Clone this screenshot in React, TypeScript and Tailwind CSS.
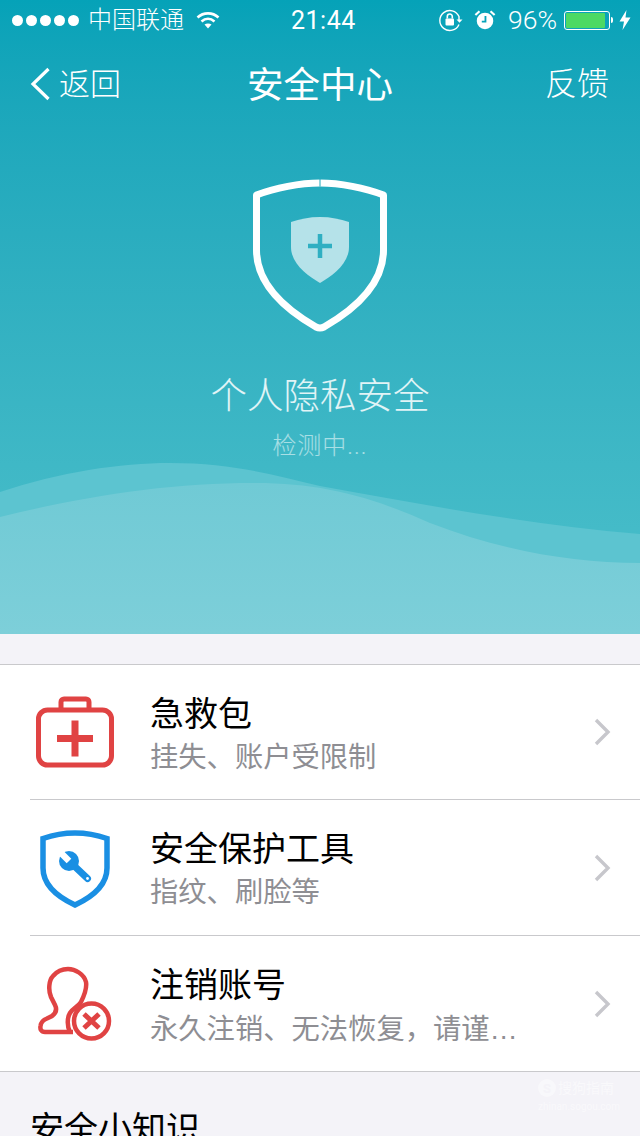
import React from "react";

function StatusBar() {
  return (
    <div className="flex h-10 items-center text-white relative">
      <div className="flex items-center pl-[12px] gap-[3px]">
        {[0, 1, 2, 3, 4].map((i) => (
          <span key={i} className="h-[11px] w-[11px] rounded-full bg-white" />
        ))}
      </div>
      <span className="ml-[9px] text-[24px] leading-none font-light">中国联通</span>
      <svg className="ml-[12px]" width="24" height="18" viewBox="0 0 24 18" fill="none" stroke="#fff" strokeWidth="2.6">
        <path d="M1.5 6.5C7.5 1 16.5 1 22.5 6.5" />
        <path d="M5.5 10.5C9.5 7 14.5 7 18.5 10.5" />
        <path d="M12 17.5L8.5 13.6C10.5 12.1 13.5 12.1 15.5 13.6Z" fill="#fff" stroke="none" />
      </svg>
      <span className="absolute left-[291px] top-[6px] text-[25px] leading-[30px] font-normal tracking-[0.5px]">21:44</span>
      <div className="ml-auto flex items-center pr-[9px]">
        <svg width="26" height="24" viewBox="0 0 26 24" fill="none" stroke="#fff" strokeWidth="1.4">
          <path d="M21 16.5A10 10 0 1 1 21 8.5V12" />
          <path d="M18.5 11.5h6l-3 3.2z" fill="#fff" stroke="none" />
          <rect x="7.5" y="10.5" width="8.5" height="7" rx="1" fill="#fff" stroke="none" />
          <path d="M9.3 10.5V8.5a2.5 2.5 0 0 1 5 0v2" strokeWidth="1.6" />
        </svg>
        <svg className="ml-[10px]" width="22" height="22" viewBox="0 0 24 24">
          <circle cx="12" cy="13" r="9" fill="#fff" />
          <path d="M1.5 6.5L6 2.5M22.5 6.5L18 2.5" stroke="#fff" strokeWidth="2.4" />
          <path d="M12.5 7.5v6.2H8.5" stroke="#07a3b9" strokeWidth="2" fill="none" />
        </svg>
        <span className="ml-[12px] text-[26.5px] leading-none font-light">96%</span>
        <div className="ml-[7px] h-[19px] w-[46px] rounded-[3px] border border-white p-[1px]">
          <div className="h-full w-[94%] rounded-[1px] bg-[#4cd964]" />
        </div>
        <div className="ml-[1px] h-[6px] w-[2px] rounded-r-sm bg-white" />
        <svg className="ml-[6px]" width="12" height="20" viewBox="0 0 12 20">
          <path d="M7.5 0L0.5 11.5H5L3.5 20L11.5 7.5H6.5Z" fill="#fff" />
        </svg>
      </div>
    </div>
  );
}

function NavBar() {
  return (
    <div className="flex h-[88px] items-center text-white relative">
      <svg className="ml-[30px]" width="22" height="34" viewBox="0 0 22 34" fill="none" stroke="#fff" strokeWidth="3.2">
        <path d="M18.5 2L3 17L18.5 32" />
      </svg>
      <span className="ml-[7px] text-[31px] leading-none font-light">返回</span>
      <span className="absolute left-0 right-0 pt-[4px] text-center text-[36.500px] leading-none font-normal">安全中心</span>
      <span className="ml-auto mr-[31px] text-[32px] leading-none font-light">反馈</span>
    </div>
  );
}

function BigShield() {
  return (
    <svg width="140" height="156" viewBox="0 0 140 156" fill="none">
      <path
        d="M70 5C50 5 25 10 6.500 17V72C6.500 108 40 134 66 149Q70 151 74 149C100 134 133.500 108 133.500 72V17C115 10 90 5 70 5Z"
        stroke="#fff"
        strokeWidth="7"
        strokeLinejoin="round"
      />
      <path d="M70 1V8.500" stroke="#1fa9bd" strokeWidth="1" />
      <path
        d="M70 39C59 39 50 41 41 44V69C41 86 58 98 70 105C82 98 99 86 99 69V44C90 41 81 39 70 39Z"
        fill="#b5e2e9"
      />
      <path d="M58 68H82M70 56V80" stroke="#2fafc2" strokeWidth="4.500" />
    </svg>
  );
}

function Hero() {
  return (
    <div className="relative h-[634px] overflow-hidden bg-gradient-to-b from-[#05a2b8] to-[#4cc0cb]">
      <svg className="absolute left-0 top-0" width="640" height="634" viewBox="0 0 640 634">
        <path d="M0 492C60 472 120 463 170 463C230 463 270 474 320 486C420 504 530 525 640 534V634H0Z" fill="#5cc4d0" />
        <path d="M0 517C90 495 170 483 255 483C320 483 370 496 430 523C500 550 570 563 640 563V634H0Z" fill="url(#frontWave)" />
        <defs>
          <linearGradient id="frontWave" x1="0" y1="483" x2="0" y2="634" gradientUnits="userSpaceOnUse">
            <stop offset="0" stopColor="#70cad5" />
            <stop offset="1" stopColor="#7dcfd9" />
          </linearGradient>
        </defs>
      </svg>
      <div className="relative flex flex-col">
        <StatusBar />
        <NavBar />
        <div className="mt-[50px] flex flex-col items-center">
          <BigShield />
          <div className="mt-[38px] text-[36.500px] leading-[50px] font-light text-white/85">个人隐私安全</div>
          <div className="mt-[9px] text-[24px] leading-[30px] font-light tracking-[1px] text-white/55">检测中...</div>
        </div>
      </div>
    </div>
  );
}

function KitIcon() {
  return (
    <svg width="78" height="72" viewBox="0 0 78 72" fill="none" stroke="#e04343" strokeWidth="5">
      <path d="M25 14V6a3 3 0 0 1 3-3h22a3 3 0 0 1 3 3v8" />
      <rect x="2.500" y="14" width="73" height="55" rx="9" />
      <path d="M21 42.500H57M39 24.500V60.500" strokeWidth="7" />
    </svg>
  );
}

function ToolShieldIcon() {
  return (
    <svg className="mt-[2px]" width="70" height="78" viewBox="0 0 70 78" fill="none">
      <path
        d="M35 3C24 3 13 5 3 8.500V38C3 57 20 68 35 75C50 68 67 57 67 38V8.500C57 5 46 3 35 3Z"
        stroke="#1a8fe3"
        strokeWidth="5.500"
      />
      <circle cx="29" cy="31" r="10" fill="#1a8fe3" />
      <path d="M29 31L47.500 48.500" stroke="#1a8fe3" strokeWidth="7" strokeLinecap="round" />
      <path d="M29 31L17 19" stroke="#fff" strokeWidth="6.500" />
      <circle cx="47.500" cy="48.500" r="1.400" fill="#fff" />
    </svg>
  );
}

function UserXIcon() {
  return (
    <svg width="76" height="76" viewBox="0 0 76 76" fill="none" stroke="#e04343" strokeWidth="4.500">
      <path d="M36 66H8C4 66 3 63 3.500 60C4 56 6 54 10 52.500L15 50C19 47 20 43 18 39L14 31C11 24 12 14 16 10C21 4 27 3 31 3C38 3 47 8 49 16C50 22 48 28 44 36C42 40 36 42 33 47C30 52 30 60 33 66" />
      <circle cx="54.500" cy="55" r="17.500" fill="#fff" />
      <path d="M47 48L62 62M62 48L47 62" strokeWidth="5" />
    </svg>
  );
}

function Row({
  icon,
  title,
  sub,
  dots,
  divider,
  h,
}: {
  icon: React.ReactNode;
  title: string;
  sub: string;
  dots?: boolean;
  divider: boolean;
  h: string;
}) {
  return (
    <div className={`ml-[30px] flex items-center ${h} ${divider ? "border-b border-[#c9c9cc]" : ""}`}>
      <div className="flex w-[90px] justify-center">{icon}</div>
      <div className="ml-[30px] flex-1 pt-[3px]">
        <div className="text-[34px] leading-[44px] font-normal text-black">{title}</div>
        <div className="mt-[4px] whitespace-nowrap text-[28.300px] leading-[36px] font-normal text-[#8e8e93]">
          {sub}
          {dots ? <span className="font-['Liberation_Sans']">…</span> : null}
        </div>
      </div>
      <svg className="mr-[29px]" width="18" height="28" viewBox="0 0 18 28" fill="none" stroke="#c7c7cc" strokeWidth="3.400">
        <path d="M3 2L15 14L3 26" />
      </svg>
    </div>
  );
}

export default function App() {
  return (
    <div
      className="relative h-[1136px] w-[640px] overflow-hidden bg-[#f4f3f8] font-['Roboto','Noto_Sans_CJK_SC',sans-serif]"
    >
      <Hero />
      <div className="mt-[30px] border-y border-[#c9c9cc] bg-white">
        <Row h="h-[135px]" divider icon={<KitIcon />} title="急救包" sub="挂失、账户受限制" />
        <Row h="h-[136px]" divider icon={<ToolShieldIcon />} title="安全保护工具" sub="指纹、刷脸等" />
        <Row h="h-[135px]" divider={false} dots icon={<UserXIcon />} title="注销账号" sub="永久注销、无法恢复，请谨" />
      </div>
      <div className="mt-[35px] pl-[30px] text-[34px] leading-[44px] font-normal text-black">安全小知识</div>
      <div className="absolute left-[538px] top-[1079px] flex flex-col items-start text-white/50">
        <div className="flex items-center gap-[2px]">
          <span className="flex h-[18px] w-[18px] items-center justify-center rounded-full bg-white/40 text-[13px] leading-none font-bold text-[#f4f3f8]">S</span>
          <span className="text-[14px] leading-[18px]">搜狗指南</span>
        </div>
        <span className="mt-[4px] text-[10px] leading-[12px]">zhinan.sogou.com</span>
      </div>
    </div>
  );
}
